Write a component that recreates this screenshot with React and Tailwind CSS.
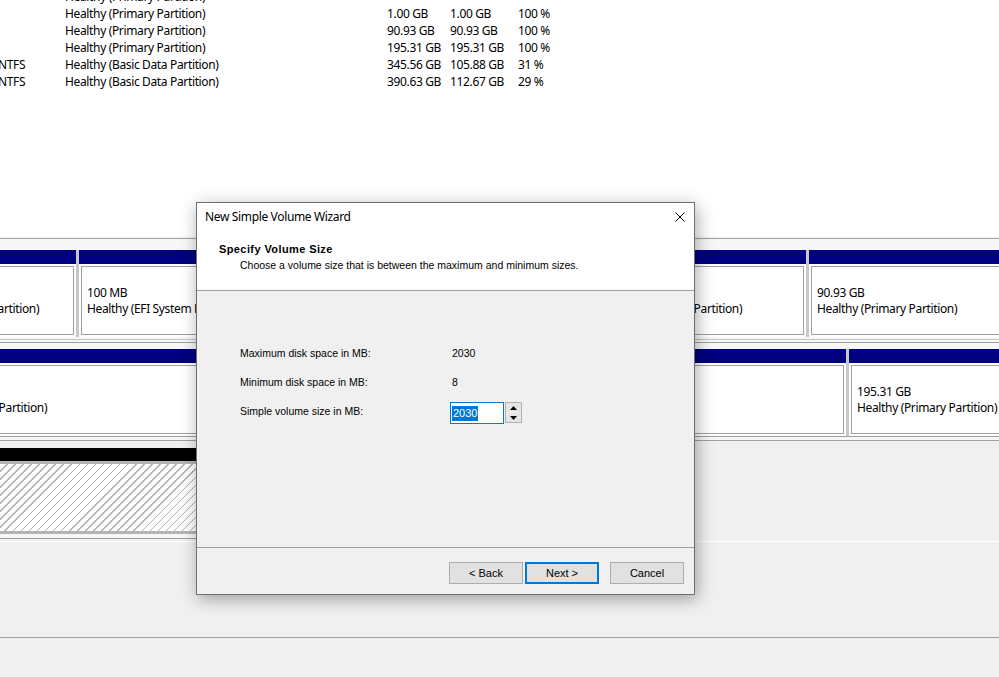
import React from "react";

const rows = [
  ["", "Healthy (Primary Partition)", "", "", ""],
  ["", "Healthy (Primary Partition)", "1.00 GB", "1.00 GB", "100 %"],
  ["", "Healthy (Primary Partition)", "90.93 GB", "90.93 GB", "100 %"],
  ["", "Healthy (Primary Partition)", "195.31 GB", "195.31 GB", "100 %"],
  ["NTFS", "Healthy (Basic Data Partition)", "345.56 GB", "105.88 GB", "31 %"],
  ["NTFS", "Healthy (Basic Data Partition)", "390.63 GB", "112.67 GB", "29 %"],
];

function Part({ cls, lines }) {
  return (
    <div className={`flex flex-col shrink-0 ${cls}`}>
      <div className="h-[14px] bg-[#000080]" />
      <div className="flex-1 bg-white p-[2px]">
        <div className="h-full border border-[#a0a0a0] pl-[5px] pt-[18px] leading-[16px] whitespace-nowrap overflow-hidden">
          {lines.map((l, i) => (
            <div key={i} className="h-[16px]">{l}</div>
          ))}
        </div>
      </div>
    </div>
  );
}

function Button({ children, primary }) {
  return (
    <div
      className={`h-[22px] flex items-center justify-center bg-[#e1e1e1] ${
        primary ? "border-2 border-[#0078d7] w-[74px]" : "border border-[#adadad] w-[74px]"
      }`}
    >
      {children}
    </div>
  );
}

export default function App() {
  return (
    <div className="relative w-[999px] h-[677px] overflow-hidden bg-[#f0f0f0] font-['Noto_Sans',sans-serif] text-[12px] tracking-[-0.35px] text-black">
      {/* Volume list */}
      <div className="h-[236px] bg-white overflow-hidden">
        <div className="-mt-[12px]">
          {rows.map((r, i) => (
            <div key={i} className="flex h-[17px] items-center leading-[17px] whitespace-nowrap">
              <div className="-ml-[2px] w-[67px] shrink-0">{r[0]}</div>
              <div className="w-[322px] shrink-0">{r[1]}</div>
              <div className="w-[63px] shrink-0">{r[2]}</div>
              <div className="w-[68px] shrink-0">{r[3]}</div>
              <div className="shrink-0">{r[4]}</div>
            </div>
          ))}
        </div>
      </div>

      {/* Disk map */}
      <div className="h-[2px] bg-[#f7f7f7]" />
      <div className="h-px bg-[#a0a0a0]" />
      <div className="h-[11px] bg-[#f7f7f7]" />
      <div className="flex gap-[3px] bg-[#c8c8c8] h-[87px] overflow-hidden">
        <Part cls="-ml-[109px] w-[185px]" lines={["\u00a0", "Healthy (Primary Partition)"]} />
        <Part cls="w-[512px]" lines={["100 MB", "Healthy (EFI System Partition)"]} />
        <Part cls="w-[212px]" lines={["1.00 GB", "Healthy (Primary Partition)"]} />
        <Part cls="w-[200px]" lines={["90.93 GB", "Healthy (Primary Partition)"]} />
      </div>
      <div className="h-[2px] bg-[#f7f7f7]" />
      <div className="h-px bg-[#c4c4c4]" />
      <div className="h-[2px] bg-[#f7f7f7]" />
      <div className="h-px bg-[#a0a0a0]" />
      <div className="h-[6px] bg-[#f7f7f7]" />
      <div className="flex gap-[3px] bg-[#c8c8c8] h-[87px] overflow-hidden">
        <Part cls="-ml-[101px] w-[400px]" lines={["345.56 GB NTFS", "Healthy (Primary Partition)"]} />
        <Part cls="w-[544px]" lines={["390.63 GB NTFS", "Healthy (Basic Data Partition)"]} />
        <Part cls="w-[200px]" lines={["195.31 GB", "Healthy (Primary Partition)"]} />
      </div>
      <div className="h-px bg-[#a0a0a0]" />
      <div className="h-[3px] bg-[#f7f7f7]" />
      <div className="h-px bg-[#a0a0a0]" />
      <div className="h-[7px] bg-[#f0f0f0]" />
      <div className="flex h-[91px]">
        <div className="w-[560px] flex flex-col">
          <div className="h-[13px] bg-black" />
          <div className="h-[3px] bg-[#b4b4b4]" />
          <div className="h-[67px] bg-[repeating-linear-gradient(135deg,#ffffff_0px,#ffffff_4.6px,#b0b0b0_4.6px,#b0b0b0_5.7px)]" />
          <div className="h-[3px] bg-[#b4b4b4]" />
          <div className="h-[4px] bg-[#f7f7f7]" />
          <div className="h-px bg-[#a0a0a0]" />
        </div>
      </div>
      <div className="h-[2px]" />
      <div className="h-px bg-white" />
      <div className="h-[95px]" />
      <div className="h-px bg-[#a0a0a0]" />

      {/* Dialog */}
      <div className="absolute left-[196px] top-[202px] w-[499px] h-[393px] border border-[#6f6f6f] bg-[#f0f0f0] shadow-[2px_4px_16px_rgba(0,0,0,0.35)] flex flex-col font-['Liberation_Sans',sans-serif] text-[10.5px] tracking-normal">
        <div className="h-[88px] bg-white border-b border-[#a0a0a0] flex flex-col">
          <div className="h-[28px] flex items-center justify-between pl-[8px] pr-[9px]">
            <span className="font-['Noto_Sans',sans-serif] text-[12px] tracking-[-0.35px]">New Simple Volume Wizard</span>
            <svg width="10" height="10" viewBox="0 0 10 10">
              <path d="M0.5 0.5 L9.5 9.5 M9.5 0.5 L0.5 9.5" stroke="#000" strokeWidth="1" />
            </svg>
          </div>
          <div className="pl-[22px] pt-[12px] font-bold leading-[13px] text-[11px] tracking-[0.4px]">Specify Volume Size</div>
          <div className="pl-[43px] mt-[3px] leading-[13px]">
            Choose a volume size that is between the maximum and minimum sizes.
          </div>
        </div>
        <div className="flex-1 pt-[55px] border-b border-[#a0a0a0]">
          <div className="flex h-[29px] leading-[14px]">
            <div className="w-[255px] pl-[43px]">Maximum disk space in MB:</div>
            <div>2030</div>
          </div>
          <div className="flex h-[29px] leading-[14px]">
            <div className="w-[255px] pl-[43px]">Minimum disk space in MB:</div>
            <div>8</div>
          </div>
          <div className="flex h-[29px] leading-[14px]">
            <div className="w-[255px] pl-[43px]">Simple volume size in MB:</div>
            <div className="flex -ml-[2px] -mt-[2px]">
              <div className="w-[54px] h-[22px] border border-[#0078d7] bg-white flex items-center pl-[1px]">
                <span className="bg-[#0078d7] text-white px-[1px] leading-[15px] text-[11px]">2030</span>
              </div>
              <div className="w-[17px] h-[21px] ml-px flex flex-col gap-px border border-[#b0b0b0] bg-[#f0f0f0]">
                <div className="flex-1 bg-[#e6e6e6] flex items-center justify-center">
                  <svg width="7" height="4" viewBox="0 0 7 4">
                    <path d="M3.5 0 L7 4 L0 4 Z" fill="#000" />
                  </svg>
                </div>
                <div className="flex-1 bg-[#e6e6e6] flex items-center justify-center">
                  <svg width="7" height="4" viewBox="0 0 7 4">
                    <path d="M0 0 L7 0 L3.5 4 Z" fill="#000" />
                  </svg>
                </div>
              </div>
            </div>
          </div>
        </div>
        <div className="h-[46px] flex justify-end items-start pt-[14px] pr-[10px] text-[11px]">
          <div className="flex gap-[2px]">
            <Button>&lt; Back</Button>
            <Button primary>Next &gt;</Button>
          </div>
          <div className="ml-[11px]">
            <Button>Cancel</Button>
          </div>
        </div>
      </div>
    </div>
  );
}
